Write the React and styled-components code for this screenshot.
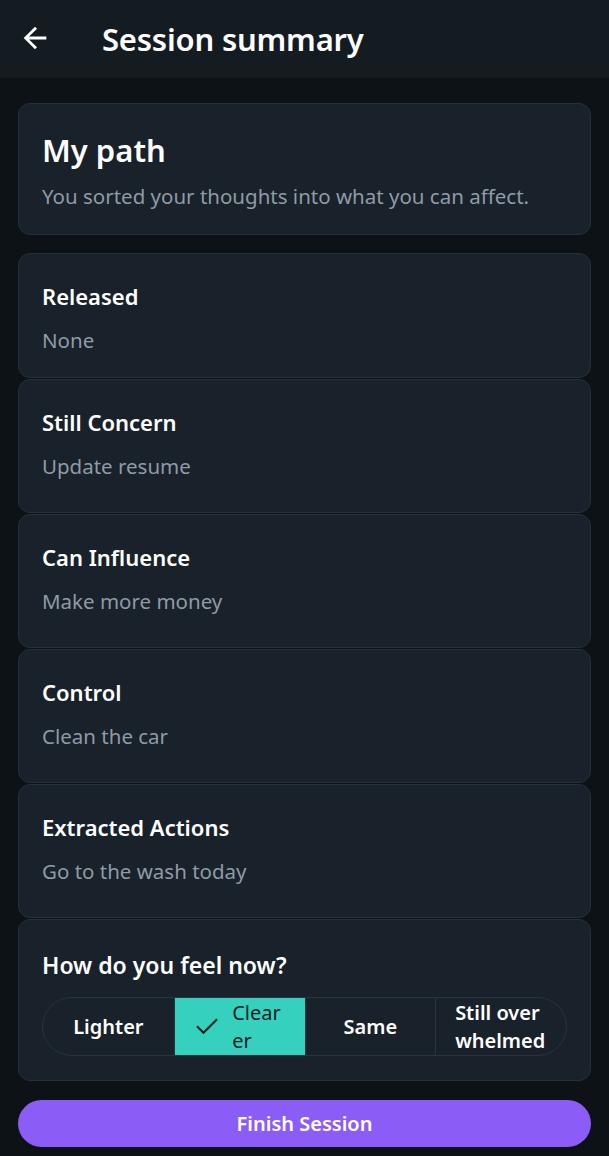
import styled, { createGlobalStyle } from "styled-components";

const GlobalStyle = createGlobalStyle`
  html, body {
    margin: 0;
    padding: 0;
    background: #0d1216;
  }
  body {
    font-family: "Noto Sans", "Open Sans", sans-serif;
    color: #ffffff;
  }
  * {
    box-sizing: border-box;
  }
`;

const Screen = styled.div`
  width: 609px;
  min-height: 1156px;
  background: #0d1216;
  display: flex;
  flex-direction: column;
`;

const TopBar = styled.header`
  height: 78px;
  background: #141b21;
  display: flex;
  align-items: center;
  padding: 0 0 0 18px;
  gap: 50px;

  h1 {
    margin: 0;
    font-size: 31px;
    font-weight: 600;
    letter-spacing: -0.2px;
    color: #ffffff;
  }
`;

const BackButton = styled.button`
  width: 34px;
  height: 34px;
  padding: 0;
  border: 0;
  background: none;
  color: #ffffff;
  display: flex;
  align-items: center;
  justify-content: center;
  margin-top: -2px;
`;

const Content = styled.main`
  padding: 25px 18px 10px;
  display: flex;
  flex-direction: column;
`;

const Card = styled.section`
  background: #19212a;
  border: 1px solid #263039;
  border-radius: 12px;
  padding: ${(p) => p.$pad || "28px 23px 24px"};
  margin-bottom: ${(p) => p.$space ?? 1}px;
`;

const PathTitle = styled.h2`
  margin: 0;
  font-size: 31px;
  line-height: 38px;
  font-weight: 600;
`;

const CardTitle = styled.h3`
  margin: 0;
  font-size: ${(p) => p.$size || 22}px;
  line-height: ${(p) => (p.$size || 22) + 7}px;
  font-weight: 600;
`;

const CardText = styled.p`
  margin: ${(p) => p.$top ?? 16}px 0 0;
  font-size: 20.5px;
  line-height: 27px;
  color: #8f9ba6;
`;

const Segments = styled.div`
  margin-top: 17px;
  height: 59px;
  display: grid;
  grid-template-columns: repeat(4, 1fr);
  border: 1px solid #29343e;
  border-radius: 30px;
  overflow: hidden;
`;

const Segment = styled.button`
  border: 0;
  border-left: ${(p) => (p.$first ? "0" : "1px solid #29343e")};
  background: ${(p) => (p.$active ? "#36d1be" : "transparent")};
  color: ${(p) => (p.$active ? "#10201f" : "#ffffff")};
  font-family: inherit;
  font-size: 20px;
  line-height: 28px;
  font-weight: ${(p) => (p.$active ? 400 : 600)};
  display: flex;
  align-items: center;
  justify-content: center;
  gap: 11px;
  padding: 0 8px;

  span {
    max-width: ${(p) => p.$max || 92}px;
    word-break: break-all;
    text-align: left;
  }
`;

const FinishButton = styled.button`
  margin-top: 19px;
  height: 47px;
  border: 0;
  border-radius: 24px;
  background: #8b5cf6;
  color: #ffffff;
  font-family: inherit;
  font-size: 20px;
  font-weight: 600;
`;

const ArrowBack = () => (
  <svg width="34" height="34" viewBox="0 0 24 24" fill="currentColor">
    <path d="M20 11H7.83l5.59-5.59L12 4l-8 8 8 8 1.41-1.41L7.83 13H20v-2z" />
  </svg>
);

const Check = () => (
  <svg
    width="28"
    height="28"
    viewBox="0 0 24 24"
    fill="none"
    stroke="currentColor"
    strokeWidth="1.8"
    strokeLinecap="square"
  >
    <path d="M20 6 9 17l-5-5" />
  </svg>
);

const sections = [
  { title: "Released", text: "None", short: true },
  { title: "Still Concern", text: "Update resume" },
  { title: "Can Influence", text: "Make more money" },
  { title: "Control", text: "Clean the car" },
  { title: "Extracted Actions", text: "Go to the wash today" },
];

const feelings = ["Lighter", "Clearer", "Same", "Still overwhelmed"];

const App = () => {
  const selected = "Clearer";
  return (
    <>
      <GlobalStyle />
      <Screen>
        <TopBar>
          <BackButton>
            <ArrowBack />
          </BackButton>
          <h1>Session summary</h1>
        </TopBar>
        <Content>
          <Card $pad="27px 23px 24px" $space={18}>
            <PathTitle>My path</PathTitle>
            <CardText $top={14}>
              You sorted your thoughts into what you can affect.
            </CardText>
          </Card>
          {sections.map((s) => (
            <Card key={s.title} $pad={s.short ? "28px 23px 23px" : "28px 23px 32px"}>
              <CardTitle>{s.title}</CardTitle>
              <CardText>{s.text}</CardText>
            </Card>
          ))}
          <Card $pad="30px 23px 24px" $space={0}>
            <CardTitle $size={23}>How do you feel now?</CardTitle>
            <Segments>
              {feelings.map((f, i) => (
                <Segment
                  key={f}
                  $first={i === 0}
                  $active={f === selected}
                  $max={f === selected ? 54 : 92}
                >
                  {f === selected && <Check />}
                  <span>{f}</span>
                </Segment>
              ))}
            </Segments>
          </Card>
          <FinishButton>Finish Session</FinishButton>
        </Content>
      </Screen>
    </>
  );
};

export default App;
